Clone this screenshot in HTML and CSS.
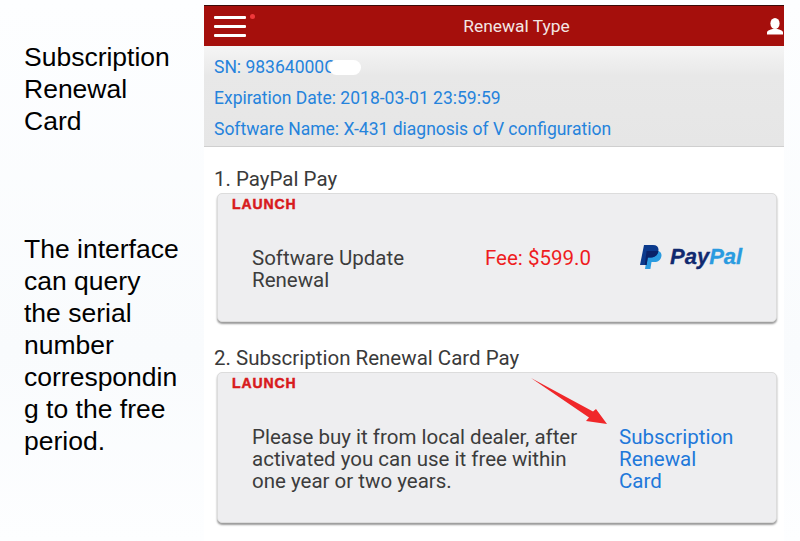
FILE: index.html
```html
<!DOCTYPE html>
<html lang="en">
<head>
    <meta charset="UTF-8">
    <meta name="viewport" content="width=device-width, initial-scale=1.0">
    <title>Renewal Type</title>
    <link rel="stylesheet" href="styles.css">
</head>
<body>
    <div class="page">
        <div class="side">
            <p class="side-title">Subscription<br>Renewal<br>Card</p>
            <p class="side-text">The interface<br>can query<br>the serial<br>number<br>correspondin<br>g to the free<br>period.</p>
        </div>

        <div class="phone">
            <div class="topbar">
                <div class="menu">
                    <span></span><span></span><span></span>
                    <i class="dot"></i>
                </div>
                <div class="topbar-title">Renewal Type</div>
                <svg class="user" width="16" height="17" viewBox="0 0 16 17">
                    <ellipse cx="8" cy="5.5" rx="4.6" ry="5.5" fill="#fff"/>
                    <path d="M0 16.5v-2.2c0-1.6 3.2-2.6 5.6-3.3h4.8c2.4.7 5.6 1.7 5.6 3.3v2.200z" fill="#fff"/>
                </svg>
            </div>

            <div class="info">
                <div class="info-line sn">SN: 98364000C<span class="blur"></span></div>
                <div class="info-line">Expiration Date: 2018-03-01 23:59:59</div>
                <div class="info-line">Software Name: X-431 diagnosis of V configuration</div>
            </div>

            <h2 class="pay-title first">1. PayPal Pay</h2>
            <div class="card card-paypal">
                <div class="brand">LAUNCH</div>
                <div class="card-row">
                    <div class="desc desc-short">Software Update<br>Renewal</div>
                    <div class="fee">Fee: $599.0</div>
                    <div class="paypal">
                        <svg width="22" height="24" viewBox="0 0 22 24">
                            <path d="M8 6h9c3 0 5 2 4.4 5.2C20.8 15 18 17 14.5 17h-3l-1.100 7H5z" fill="#2a9be0"/>
                            <path d="M4 0h9c4 0 6 2.200 5.400 5.800C17.800 10 14.800 12.500 11 12.500H7.800L6.600 20H0z" fill="#0b3a8c"/>
                            <path d="M6.600 6h11.800C17.800 10 14.800 12.500 11 12.500H7.800L6.600 20H4.800z" fill="#0a2268"/>
                        </svg>
                        <span class="pay">Pay</span><span class="pal">Pal</span>
                    </div>
                </div>
            </div>

            <h2 class="pay-title">2. Subscription Renewal Card Pay</h2>
            <div class="card card-sub">
                <div class="brand">LAUNCH</div>
                <div class="card-row">
                    <div class="desc">Please buy it from local dealer, after<br>activated you can use it free within<br>one year or two years.</div>
                    <div class="card-link">Subscription<br>Renewal<br>Card</div>
                </div>
                <svg class="arrow" width="78" height="48" viewBox="0 0 78 48">
                    <path d="M1 1L63 34.500L66 32L77 47L56 44L59 40.500z" fill="#f0272a"/>
                </svg>
            </div>
        </div>
    </div>
</body>
</html>
```

FILE: styles.css
```css
body {
    margin: 0;
    background: #fff;
    color: #000;
}

.page {
    display: flex;
    width: 800px;
    height: 541px;
    overflow: hidden;
    background: linear-gradient(180deg, #fdfeff 0%, #f9fbfd 65%, #fdfeff 100%);
}

/* left caption column */
.side {
    width: 204px;
    flex-shrink: 0;
    padding: 41px 0 0 24px;
    box-sizing: border-box;
    font-family: "Liberation Sans", Arial, sans-serif;
    font-size: 26.5px;
    line-height: 32px;
}

.side-title {
    margin: 0 0 96px;
}

.side-text {
    margin: 0;
}

/* phone screenshot */
.phone {
    width: 580px;
    flex-shrink: 0;
    margin-top: 5px;
    background: #fff;
    font-family: Roboto, "Liberation Sans", sans-serif;
}

.topbar {
    height: 41px;
    background: #a50f0c;
    border-top: 1px solid #3a0a08;
    box-sizing: border-box;
    display: flex;
    align-items: center;
    justify-content: space-between;
    padding: 0 1px 0 10px;
}

.menu {
    position: relative;
    width: 32px;
    display: flex;
    flex-direction: column;
    gap: 6px;
}

.menu span {
    height: 3px;
    background: #fff;
    border-radius: 1px;
}

.dot {
    position: absolute;
    top: -2px;
    right: -9px;
    width: 5px;
    height: 5px;
    border-radius: 50%;
    background: #f0383a;
}

.topbar-title {
    color: #f3e6e4;
    font-size: 17.4px;
    margin-left: 20px;
}

.user {
    display: block;
}

.info {
    height: 101px;
    box-sizing: border-box;
    padding: 6px 10px 0;
    background: linear-gradient(180deg, #f5f5f5 0%, #e8e8e8 30%, #e6e6e6 100%);
    border-bottom: 1px solid #cfcfcf;
}

.info-line {
    color: #2583dc;
    font-size: 17.5px;
    line-height: 31px;
}

.sn {
    position: relative;
}

.blur {
    position: absolute;
    left: 115px;
    top: 8px;
    width: 32px;
    height: 15px;
    border-radius: 8px;
    background: #fff;
}

.pay-title {
    margin: 24px 0 2px;
    padding-left: 10px;
    color: #3a3a3a;
    font-size: 20.5px;
    font-weight: 400;
    line-height: 24px;
}

.pay-title.first {
    margin-top: 20px;
}

.card {
    position: relative;
    margin-left: 13px;
    width: 560px;
    box-sizing: border-box;
    background: #eeeef0;
    border: 1px solid #dcdcdc;
    border-radius: 5px;
    box-shadow: 0 2px 2px #9a9a9a;
    padding: 3px 14px 0;
}

.card-paypal {
    height: 129px;
}

.card-sub {
    height: 151px;
}

.brand {
    color: #d81a1c;
    font-family: "Liberation Sans", Arial, sans-serif;
    font-size: 14px;
    font-weight: 700;
    line-height: 15px;
    -webkit-text-stroke: 0.5px #d81a1c;
    letter-spacing: 0.9px;
}

.card-row {
    display: flex;
    align-items: flex-start;
    padding-left: 20px;
    margin-top: 35px;
}

.desc {
    width: 346px;
    flex-shrink: 0;
    color: #3c3c3c;
    font-size: 20.5px;
    line-height: 22px;
}

.desc-short {
    width: 233px;
}

.fee {
    color: #ee1c1e;
    font-size: 20.5px;
    line-height: 22px;
    width: 155px;
    flex-shrink: 0;
}

.paypal {
    display: flex;
    align-items: center;
    margin-top: -3px;
    font-family: "Liberation Sans", Arial, sans-serif;
    font-size: 22px;
    font-weight: 700;
    font-style: italic;
    -webkit-text-stroke: 0.3px;
}

.paypal svg {
    margin-right: 8px;
}

.pay {
    color: #10296f;
}

.pal {
    color: #2a9be0;
}

.card-link {
    color: #2178da;
    font-size: 20.5px;
    line-height: 22px;
    margin-left: 21px;
}

.arrow {
    position: absolute;
    left: 312px;
    top: 4px;
}
```
